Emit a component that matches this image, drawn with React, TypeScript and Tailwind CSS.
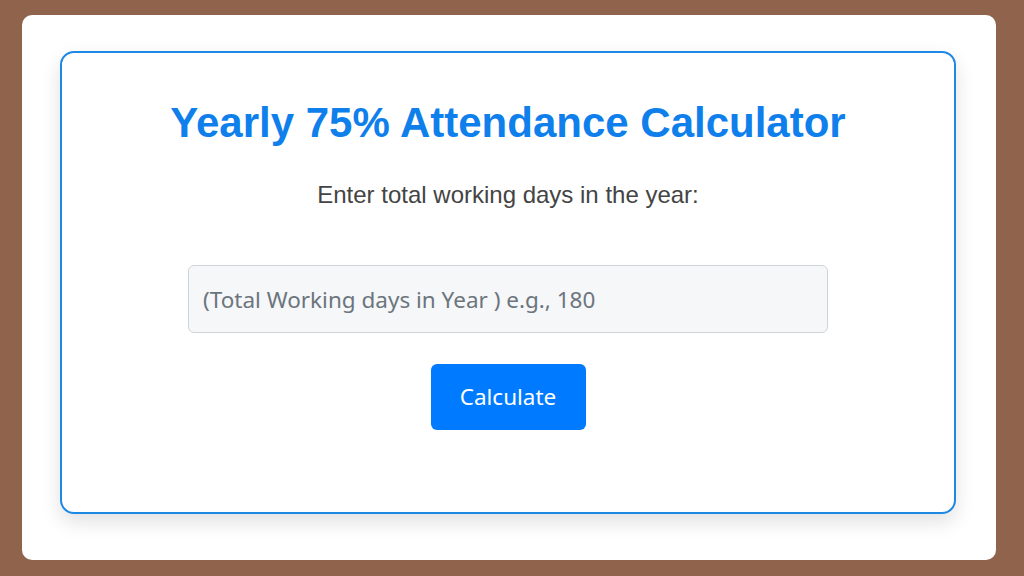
export default function App() {
  return (
    <div className="flex h-[576px] w-[1024px] bg-[#8f634c] pb-[16px] pl-[22px] pr-[28px] pt-[15px]">
      <div className="flex flex-1 rounded-[10px] bg-white pb-[46px] pl-[38px] pr-[40px] pt-[36px]">
        <div className="flex flex-1 flex-col items-center rounded-[14px] border-2 border-[#1e88e5] bg-white pt-[45px] shadow-[0_8px_20px_rgba(0,0,0,0.12)]">
          <h1 className="font-['Liberation_Sans',Arial,sans-serif] text-[42px] font-bold leading-[50px] text-[#0f7fec]">
            Yearly 75% Attendance Calculator
          </h1>
          <p className="mt-[33px] font-['Liberation_Sans',Arial,sans-serif] text-[24px] leading-[28px] text-[#444]">
            Enter total working days in the year:
          </p>
          <input
            type="text"
            placeholder="(Total Working days in Year ) e.g., 180"
            className="mt-[56px] h-[68px] w-[640px] rounded-[6px] border border-[#cfd4d9] bg-[#f5f7f9] px-[14px] font-['Noto_Sans',sans-serif] text-[22.5px] text-[#333] outline-none placeholder:text-[#6c757d]"
          />
          <button className="mt-[31px] h-[66px] w-[155px] rounded-[6px] bg-[#007bff] font-['Noto_Sans',sans-serif] text-[22.5px] text-white">
            Calculate
          </button>
        </div>
      </div>
    </div>
  );
}
